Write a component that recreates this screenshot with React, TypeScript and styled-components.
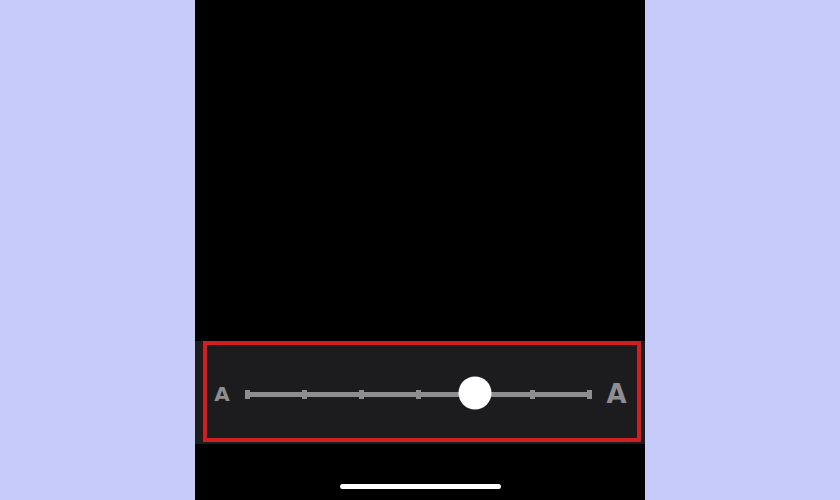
import styled, { createGlobalStyle } from "styled-components";

const Global = createGlobalStyle`
  html, body {
    margin: 0;
    padding: 0;
    background: #c6cbfa;
    font-family: "Liberation Sans", Arial, sans-serif;
  }
`;

const Page = styled.div`
  width: 840px;
  height: 500px;
  display: flex;
  justify-content: center;
  background: #c6cbfa;
`;

const Phone = styled.div`
  width: 450px;
  height: 500px;
  background: #000;
  display: flex;
  flex-direction: column;
`;

const Viewport = styled.div`
  flex: 1;
`;

const Panel = styled.div`
  height: 103px;
  padding: 0 4px 2px 8px;
  box-sizing: border-box;
  background: #1c1c1e;
`;

const Highlight = styled.div`
  height: 101px;
  box-sizing: border-box;
  border: 4px solid #cf1f22;
  display: flex;
  align-items: center;
  padding: 5px 0 0 7px;
`;

const Glyph = styled.span<{ $size: number; $w: number }>`
  width: ${({ $w }) => $w}px;
  font-family: "DejaVu Sans", "Liberation Sans", sans-serif;
  font-size: ${({ $size }) => $size}px;
  font-weight: 700;
  color: #8e8e93;
  line-height: 1;
  text-align: center;
`;

const Slider = styled.div`
  position: relative;
  width: 347px;
  height: 9px;
  margin: 0 14px 0 15px;
  display: flex;
  align-items: center;
  justify-content: space-between;
`;

const Track = styled.div`
  position: absolute;
  left: 2px;
  right: 2px;
  top: 2px;
  height: 5px;
  background: #8e8e8e;
`;

const Tick = styled.div`
  position: relative;
  width: 5px;
  height: 9px;
  background: #8e8e8e;
`;

const Thumb = styled.div`
  position: absolute;
  top: 50%;
  width: 33px;
  height: 33px;
  border-radius: 50%;
  background: #fff;
  transform: translate(-50%, -50%);
  margin-top: -1px;
`;

const Bottom = styled.div`
  height: 56px;
  padding-top: 40px;
  box-sizing: border-box;
  display: flex;
  justify-content: center;
`;

const HomeBar = styled.div`
  width: 161px;
  height: 5px;
  border-radius: 3px;
  background: #fff;
`;

const steps = 7;
const value = 4;

export default function App() {
  return (
    <Page>
      <Global />
      <Phone>
        <Viewport />
        <Panel>
          <Highlight>
            <Glyph $size={20} $w={16}>A</Glyph>
            <Slider>
              <Track />
              {Array.from({ length: steps }).map((_, i) => (
                <Tick key={i} />
              ))}
              <Thumb style={{ left: `${1.5 + (value / (steps - 1)) * 342}px` }} />
            </Slider>
            <Glyph $size={26} $w={21}>A</Glyph>
          </Highlight>
        </Panel>
        <Bottom>
          <HomeBar />
        </Bottom>
      </Phone>
    </Page>
  );
}
